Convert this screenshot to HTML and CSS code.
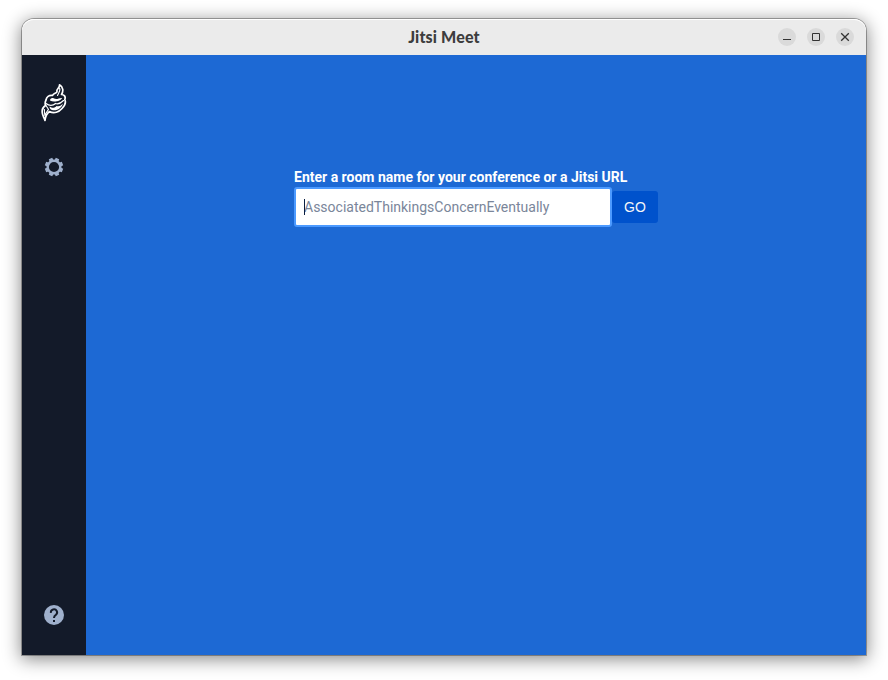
FILE: index.html
```html
<!DOCTYPE html>
<html lang="en">
<head>
<meta charset="utf-8">
<title>Jitsi Meet</title>
<link rel="stylesheet" href="styles.css">
</head>
<body>
<div class="window">
  <header class="titlebar">
    <h1 class="title">Jitsi Meet</h1>
    <div class="controls">
      <button class="control" aria-label="Minimize"><svg width="18" height="18" viewBox="0 0 18 18"><path d="M5 11.500h8"/></svg></button>
      <button class="control" aria-label="Maximize"><svg width="18" height="18" viewBox="0 0 18 18"><path d="M5.500 5.500h7v7h-7z"/></svg></button>
      <button class="control" aria-label="Close"><svg width="18" height="18" viewBox="0 0 18 18"><path d="M5.200 5.200l7.600 7.600M12.800 5.200l-7.600 7.600" stroke-width="1.300"/></svg></button>
    </div>
  </header>
  <div class="body">
    <nav class="sidebar">
      <svg class="logo" width="26" height="40" viewBox="0 0 26 40">
        <path class="shape" d="M18.500 1.800C19 5 15 6 16 8.500C16 10.500 12.500 10 11.500 12.500C8 12 5.500 14 5 17C4 19 4 21 4.500 22.500C2 24 1 26 1.200 28.500C0.800 32 3 34 4 37.500C4.500 33 5.500 30.500 8.500 28.500C13 31 18 29 21 25.500C24.500 22 25 19 23.800 16.500C25 13.500 23 11.500 20.500 11.500C22.500 8.500 22.500 4 18.500 1.800Z"/>
        <path class="fill" d="M9 17.500C9 15.500 11 14.500 13 15.500C16 17 18.500 14.500 21 15C20.500 17.500 13 20 9 17.500Z"/>
        <path class="fill" d="M8.500 23.500C12 26 14 24.500 15.500 23C18 24 20.500 22.500 21.800 20.500C21 25 15.500 28.500 11 27C9.500 26.500 8.500 25.500 8.500 23.500Z"/>
        <path class="line" d="M5 20.500C8 23 12 23 14.500 20.500C17 21.500 20 20 22.500 17.500M18.500 5C20 7 18 9 16.500 12.500M3.500 26.500C3 29 3.500 31 4 33C4.500 30 6 28.500 7.500 26.500L5 22.500"/>
      </svg>
      <svg class="gear" width="20" height="20" viewBox="0 0 20 20">
        <circle cx="10" cy="10" r="6.300"/>
        <g>
          <path id="tooth" d="M7.800 4L8.200 0.800h3.600L12.200 4z" transform="rotate(22.5 10 10)"/>
          <use href="#tooth" transform="rotate(45 10 10)"/>
          <use href="#tooth" transform="rotate(90 10 10)"/>
          <use href="#tooth" transform="rotate(135 10 10)"/>
          <use href="#tooth" transform="rotate(180 10 10)"/>
          <use href="#tooth" transform="rotate(225 10 10)"/>
          <use href="#tooth" transform="rotate(270 10 10)"/>
          <use href="#tooth" transform="rotate(315 10 10)"/>
        </g>
      </svg>
      <svg class="help" width="20" height="20" viewBox="0 0 20 20">
        <circle cx="10" cy="10" r="10"/>
        <path d="M6.900 7.800A3.100 3.100 0 1 1 11.800 9.900Q10 11 10 13"/>
        <path d="M9 16h2"/>
      </svg>
    </nav>
    <main class="main">
      <form class="join">
        <label class="label" for="room">Enter a room name for your conference or a Jitsi URL</label>
        <div class="row">
          <div class="field"><span class="caret"></span><input id="room" class="input" type="text" placeholder="AssociatedThinkingsConcernEventually"></div>
          <button class="go" type="button">GO</button>
        </div>
      </form>
    </main>
  </div>
</div>
</body>
</html>
```
FILE: styles.css
```css
* { box-sizing: border-box; }
body {
  margin: 0;
  height: 680px;
  padding: 19px 22px 25px;
  background: #fff;
  overflow: hidden;
  font-family: Roboto, sans-serif;
}
.window {
  width: 844px;
  height: 636px;
  display: flex;
  flex-direction: column;
  border-radius: 12px 12px 0 0;
  box-shadow: 0 0 0 1px rgba(0, 0, 0, .3), 0 3px 18px 1px rgba(0, 0, 0, .48);
}
.titlebar {
  height: 36px;
  display: grid;
  grid-template-columns: 1fr auto 1fr;
  align-items: center;
  background: #ebebeb;
  border-radius: 12px 12px 0 0;
  box-shadow: inset 0 1px #fff;
}
.title {
  grid-column: 2;
  margin: 0 0 1px;
  font: 900 16px/20px Lato, sans-serif;
  letter-spacing: .15px;
  color: #3d3d3d;
}
.controls {
  display: flex;
  justify-content: flex-end;
  gap: 11px;
  padding-right: 12px;
}
.control {
  width: 18px;
  height: 18px;
  padding: 0;
  border: 0;
  border-radius: 50%;
  background: #dadada;
}
.control svg {
  display: block;
  fill: none;
  stroke: #333;
}
.body { flex: 1; display: flex; }
.sidebar {
  width: 64px;
  display: flex;
  flex-direction: column;
  align-items: center;
  padding: 28px 0 30px;
  background: #131a29;
}
.shape { fill: #131a29; stroke: #fff; stroke-width: 1.700; stroke-linejoin: round; }
.fill { fill: #fff; }
.line { fill: none; stroke: #fff; stroke-width: 1.100; stroke-linecap: round; }
.gear { margin-top: 34px; margin-right: 1px; fill: #9fb0cc; }
.gear circle { fill: none; stroke: #9fb0cc; stroke-width: 2.400; }
.help { margin-top: auto; fill: #9fb0cc; }
.help path { fill: none; stroke: #131a29; stroke-width: 2; }
.main {
  flex: 1;
  padding: 112px 0 0 208px;
  background: #1d69d4;
}
.label {
  display: block;
  height: 20px;
  font-size: 14px;
  line-height: 20px;
  font-weight: 700;
  white-space: nowrap;
  color: #fff;
}
.row { display: flex; align-items: center; }
.field {
  position: relative;
  width: 318px;
  height: 40px;
  border: 2px solid #4c9aff;
  border-radius: 3px;
  background: #fff;
}
.caret {
  position: absolute;
  left: 8px;
  top: 10px;
  width: 1px;
  height: 16px;
  background: #091e42;
}
.input {
  display: block;
  width: 100%;
  height: 36px;
  padding: 0 8px;
  border: 0;
  outline: 0;
  background: transparent;
  font: 14px/20px Roboto, sans-serif;
}
.input::placeholder { color: #7a869a; opacity: 1; }
.go {
  width: 46px;
  height: 32px;
  padding: 0;
  border: 0;
  border-radius: 3px;
  background: #0052cc;
  color: #f4f5f7;
  font: 14px/32px "Liberation Sans", sans-serif;
}
```
